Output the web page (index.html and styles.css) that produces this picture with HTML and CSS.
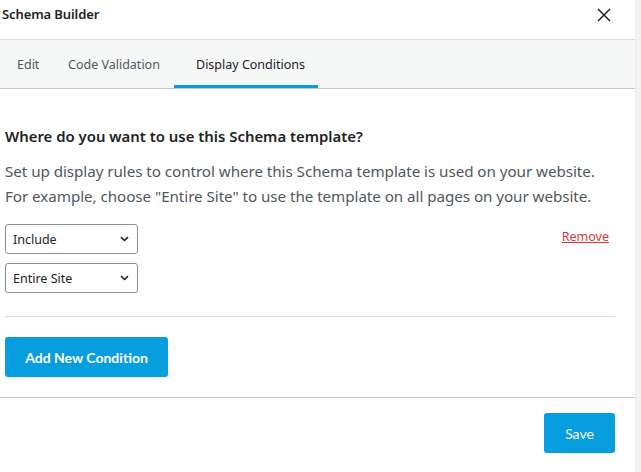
FILE: index.html
```html
<!DOCTYPE html>
<html lang="en">
<head>
<meta charset="utf-8">
<title>Schema Builder</title>
<link rel="stylesheet" href="styles.css">
</head>
<body>
<div class="screen">
  <div class="dialog">
    <header class="header">
      <h1 class="title">Schema Builder</h1>
      <button class="close" aria-label="Close">
        <svg width="14" height="14" viewBox="0 0 14 14"><path d="M1 1L13 13M13 1L1 13" stroke="#1d2327" stroke-width="1.5" fill="none"/></svg>
      </button>
    </header>
    <nav class="tabs">
      <span class="tab tab-edit">Edit</span>
      <span class="tab tab-code">Code Validation</span>
      <span class="tab tab-display active">Display Conditions</span>
    </nav>
    <main class="content">
      <h2 class="heading">Where do you want to use this Schema template?</h2>
      <p class="desc">Set up display rules to control where this Schema template is used on your website.<br>For example, choose "Entire Site" to use the template on all pages on your website.</p>
      <div class="rule">
        <div class="selects">
          <div class="select"><span>Include</span><svg class="chev" width="9" height="6" viewBox="0 0 9 6"><path d="M1 1.2L4.5 4.5L8 1.2" stroke="#1d2327" stroke-width="1.6" fill="none"/></svg></div>
          <div class="select"><span>Entire Site</span><svg class="chev" width="9" height="6" viewBox="0 0 9 6"><path d="M1 1.2L4.5 4.5L8 1.2" stroke="#1d2327" stroke-width="1.6" fill="none"/></svg></div>
        </div>
        <a class="remove" href="#">Remove</a>
      </div>
      <hr class="sep">
      <button class="btn add">Add New Condition</button>
    </main>
    <footer class="footer">
      <button class="btn save">Save</button>
    </footer>
  </div>
  <div class="scrollbar"></div>
</div>
</body>
</html>
```
FILE: styles.css
```css
html, body {
  margin: 0;
  padding: 0;
  background: #ffffff;
}
body {
  font-family: "Noto Sans", "Open Sans", sans-serif;
  color: #1d2327;
}
.screen {
  display: flex;
  width: 641px;
  height: 472px;
  overflow: hidden;
}
.dialog {
  width: 635px;
  flex: none;
  display: flex;
  flex-direction: column;
  background: #fff;
}
.scrollbar {
  flex: 1;
  background: #f3f3f4;
  border-left: 1px solid #ececec;
}
.header {
  height: 39px;
  box-sizing: border-box;
  display: flex;
  align-items: center;
  justify-content: space-between;
  padding: 0 24px 11px 2px;
}
.title {
  margin: 0;
  font-size: 13px;
  font-weight: 600;
  color: #1d2327;
  letter-spacing: -0.1px;
}
.close {
  border: 0;
  background: none;
  padding: 0;
  width: 14px;
  height: 14px;
  display: flex;
  margin-top: 1px;
}
.tabs {
  height: 48px;
  display: flex;
  align-items: stretch;
  background: #f6f7f7;
  border-top: 1px solid #dcdcde;
  border-bottom: 1px solid #c3c4c7;
}
.tab {
  display: flex;
  align-items: center;
  font-size: 12.5px;
  color: #50575e;
  box-sizing: border-box;
  padding-top: 4px;
  border-bottom: 3px solid transparent;
}
.tab-edit { padding-left: 17px; width: 51px; }
.tab-code { padding-left: 17px; width: 123px; }
.tab-display { padding-left: 22px; width: 144px; }
.tab.active {
  color: #1d2327;
  border-bottom-color: #0a9be0;
}
.content {
  padding: 35px 20px 20px 5px;
  border-bottom: 1px solid #c3c4c7;
}
.heading {
  margin: 0;
  font-size: 14.9px;
  font-weight: 600;
  line-height: 24px;
  color: #1d2327;
}
.desc {
  margin: 11px 0 0;
  font-size: 15.2px;
  line-height: 25px;
  color: #50575e;
  letter-spacing: -0.05px;
}
.rule {
  margin-top: 15px;
  display: flex;
  justify-content: space-between;
  align-items: flex-start;
}
.selects {
  display: flex;
  flex-direction: column;
  gap: 9px;
}
.select {
  width: 133px;
  height: 30px;
  box-sizing: border-box;
  border: 1px solid #8c8f94;
  border-radius: 3px;
  display: flex;
  align-items: center;
  justify-content: space-between;
  padding: 0 8px 0 7px;
  font-size: 12.5px;
  color: #1d2327;
}
.remove {
  font-size: 12.5px;
  color: #d63638;
  text-decoration: underline;
  margin: 4px 6px 0 0;
}
.sep {
  border: 0;
  border-top: 1px solid #dcdcde;
  margin: 23px 0 20px;
}
.btn {
  border: 0;
  background: #079ee0;
  color: #fff;
  font-family: Lato, "Noto Sans", sans-serif;
  font-weight: 700;
  font-size: 14px;
  height: 40px;
  border-radius: 3px;
  cursor: pointer;
}
.add {
  width: 163px;
}
.footer {
  display: flex;
  justify-content: flex-end;
  padding: 15px 20px 0 0;
}
.save {
  width: 71px;
  font-weight: 400;
}
```
